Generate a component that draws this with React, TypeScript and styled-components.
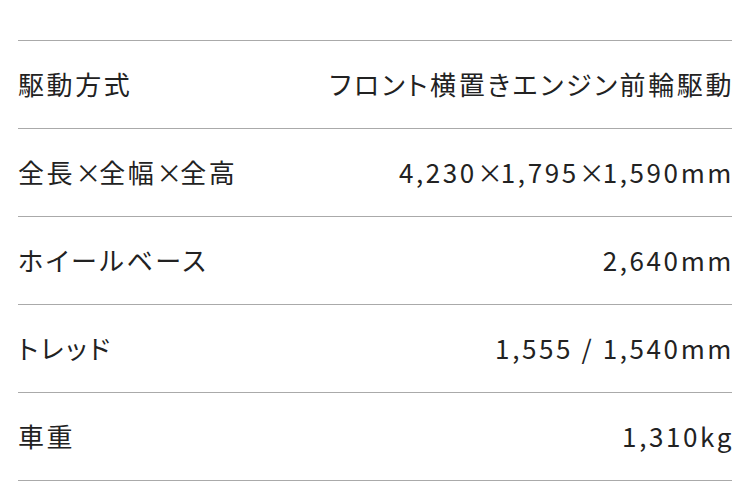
import { ReactElement } from "react";
import styled, { createGlobalStyle } from "styled-components";

const GlobalStyle = createGlobalStyle`
  body {
    margin: 0;
    background: #fff;
    font-family: "Noto Sans CJK JP", "Noto Sans", sans-serif;
    color: #222;
  }
`;

const SpecTable = styled.dl`
  margin: 0;
  padding: 40px 18px 0 18px;
  display: flex;
  flex-direction: column;
`;

const SpecRow = styled.div`
  box-sizing: border-box;
  display: flex;
  justify-content: space-between;
  align-items: center;
  height: 88px;
  padding-bottom: 2px;
  border-top: 1px solid #aaa;
  font-size: 26px;
  letter-spacing: 0.1em;
  font-feature-settings: "palt";
  &:last-child {
    height: 89px;
    border-bottom: 1px solid #aaa;
  }
`;

const SpecLabel = styled.dt`
  margin: 0;
`;

const SpecValue = styled.dd`
  margin: 0 -2px 0 0;
  text-align: right;
`;

// the "×" sign sits tighter than a full-width glyph
const Times = styled.span`
  letter-spacing: -0.08em;
`;

function withTimes(text: string): ReactElement[] {
  const parts = text.split("×");
  const out: ReactElement[] = [];
  parts.forEach((p, i) => {
    if (i > 0) out.push(<Times key={"x" + i}>×</Times>);
    out.push(<span key={"t" + i}>{p}</span>);
  });
  return out;
}

const specs = [
  ["駆動方式", "フロント横置きエンジン前輪駆動"],
  ["全長×全幅×全高", "4,230×1,795×1,590mm"],
  ["ホイールベース", "2,640mm"],
  ["トレッド", "1,555 / 1,540mm"],
  ["車重", "1,310kg"],
];

export default function App(): ReactElement {
  return (
    <>
      <GlobalStyle />
      <SpecTable>
        {specs.map(([label, value]) => (
          <SpecRow key={label}>
            <SpecLabel>{withTimes(label)}</SpecLabel>
            <SpecValue>{withTimes(value)}</SpecValue>
          </SpecRow>
        ))}
      </SpecTable>
    </>
  );
}
